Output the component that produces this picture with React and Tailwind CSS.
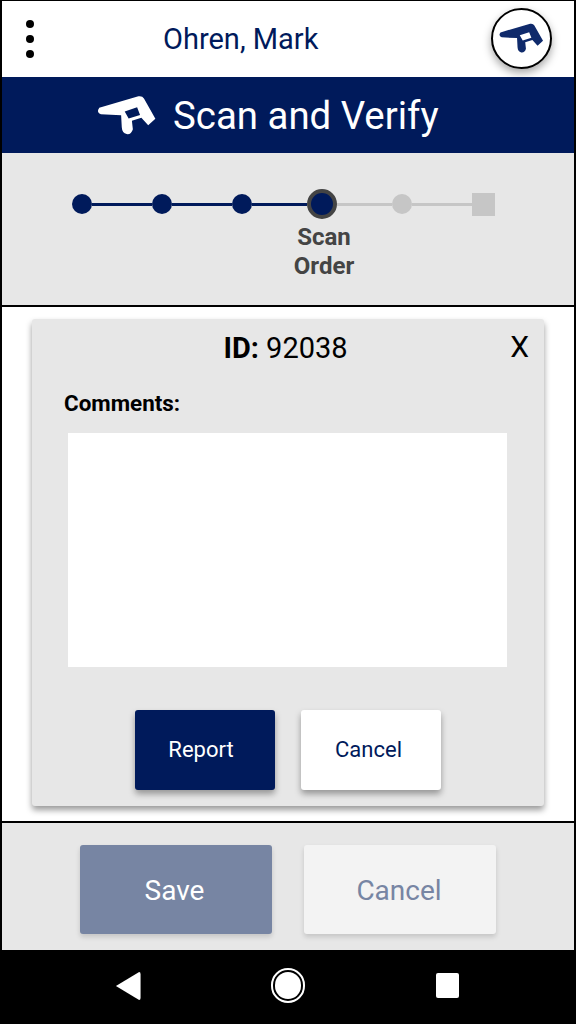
import React from 'react'

const LOGO_OUTER = 'M60 72 L180 37 Q192 35 197 44 L232 106 L210 126 L189 103 L160 112 L163 138 Q158 155 144 153 Q130 150 129 132 L127 95 L65 92 Q50 86 60 72 Z'
const LOGO_HOLE = 'M138 84 L176 71 L185 94 L150 105 Z'

const Logo = ({ className }) => (
  <svg viewBox="50 30 190 130" className={className} fill="currentColor">
    <path fillRule="evenodd" d={`${LOGO_OUTER} ${LOGO_HOLE}`} />
  </svg>
)

const Dot = ({ active }) => (
  <div className={`w-5 h-5 rounded-full shrink-0 ${active ? 'bg-[#001a5b]' : 'bg-[#c6c6c6]'}`}></div>
)

const Line = ({ width, active }) => (
  <div className={`h-[3px] shrink-0 ${width} ${active ? 'bg-[#001a5b]' : 'bg-[#c6c6c6]'}`}></div>
)

const Stepper = () => (
  <div className="h-[154px] shrink-0 bg-[#e7e7e7] border-b-2 border-black pt-[36px]">
    <div className="flex items-center h-[30px] pl-[70px]">
      <Dot active />
      <Line width="w-[60px]" active />
      <Dot active />
      <Line width="w-[60px]" active />
      <Dot active />
      <Line width="w-[55px]" active />
      <div className="w-[30px] h-[30px] shrink-0 rounded-full bg-[#001a5b] border-[4px] border-[#444444]"></div>
      <Line width="w-[55px]" />
      <Dot />
      <Line width="w-[60px]" />
      <div className="w-[23px] h-[23px] shrink-0 bg-[#c6c6c6]"></div>
    </div>
    <p className="w-[80px] ml-[282px] mt-[4px] text-center text-[24px] leading-[29px] font-bold text-[#444444]">Scan<br />Order</p>
  </div>
)

const App = () => {
  return (
    <div className="w-[576px] h-[1024px] flex flex-col bg-black overflow-hidden font-['Roboto',sans-serif]">
      <div className="flex-1 flex flex-col mx-[2px] mt-[1px] min-h-0">
        <div className="h-[76px] shrink-0 bg-white flex items-center pl-[24px] pr-[22px]">
          <div className="flex flex-col gap-[7px] -mt-[1px]">
            <div className="w-[8px] h-[8px] rounded-full bg-black"></div>
            <div className="w-[8px] h-[8px] rounded-full bg-black"></div>
            <div className="w-[8px] h-[8px] rounded-full bg-black"></div>
          </div>
          <p className="ml-[129px] text-[29px] leading-none text-[#001a5b]">Ohren, Mark</p>
          <div className="ml-auto w-[61px] h-[61px] -mt-[2px] rounded-full bg-white border-2 border-black shadow-[0_4px_8px_rgba(0,0,0,0.35)] flex items-center justify-center">
            <Logo className="w-[47px] text-[#0f2a6b]" />
          </div>
        </div>

        <div className="h-[76px] shrink-0 bg-[#001a5b] flex items-center pl-[94px] gap-[15px] text-white">
          <Logo className="w-[62px]" />
          <h1 className="mt-[3px] text-[38.400px] leading-none font-normal">Scan and Verify</h1>
        </div>

        <Stepper />

        <div className="h-[516px] shrink-0 bg-white border-b-2 border-black px-[30px] pt-[12px]">
          <div className="relative h-[487px] bg-[#e7e7e7] rounded-[3px] shadow-[0_4px_6px_rgba(0,0,0,0.4)] px-[32px]">
            <p className="pt-[12px] pr-[5px] text-center text-[29px] leading-[34px] text-black"><b>ID:</b> 92038</p>
            <span className="absolute top-[11px] right-[15px] text-[30px] leading-[34px] text-black">X</span>
            <p className="mt-[25px] text-[22.400px] leading-[26px] font-bold text-black">Comments:</p>
            <div className="ml-[4px] mt-[17px] w-[439px] h-[234px] bg-white"></div>
            <div className="flex ml-[71px] mt-[43px] gap-[26px]">
              <button className="w-[140px] h-[80px] pr-[8px] pb-[2px] rounded-[3px] bg-[#001a5b] text-white text-[22px] shadow-[0_4px_6px_rgba(0,0,0,0.35)]">Report</button>
              <button className="w-[140px] h-[80px] pr-[5px] pb-[2px] rounded-[3px] bg-white text-[#001a5b] text-[22px] shadow-[0_4px_6px_rgba(0,0,0,0.35)]">Cancel</button>
            </div>
          </div>
        </div>

        <div className="flex-1 bg-[#e7e7e7] flex pl-[78px] pt-[22px] gap-[32px]">
          <button className="w-[192px] h-[89px] pr-[3px] pt-[2px] rounded-[3px] bg-[#7785a3] text-white text-[28px] shadow-[0_3px_5px_rgba(0,0,0,0.15)]">Save</button>
          <button className="w-[192px] h-[89px] pr-[2px] pt-[2px] rounded-[3px] bg-[#f3f3f3] text-[#7785a3] text-[28px] shadow-[0_3px_5px_rgba(0,0,0,0.15)]">Cancel</button>
        </div>
      </div>

      <div className="h-[74px] shrink-0 bg-black flex items-center pb-[3px]">
        <svg viewBox="0 0 28 32" className="w-[26px] h-[30px] ml-[115px]" fill="white">
          <path d="M26 1 Q27.500 1 27.500 3 L27.500 29 Q27.500 31 26 31 L1 16 Z" />
        </svg>
        <div className="ml-[130px] w-[34px] h-[35px] rounded-full border-2 border-white flex items-center justify-center">
          <div className="w-[26px] h-[27px] rounded-full bg-white"></div>
        </div>
        <div className="ml-[131px] w-[23px] h-[25px] rounded-[2px] bg-white"></div>
      </div>
    </div>
  )
}

export default App
